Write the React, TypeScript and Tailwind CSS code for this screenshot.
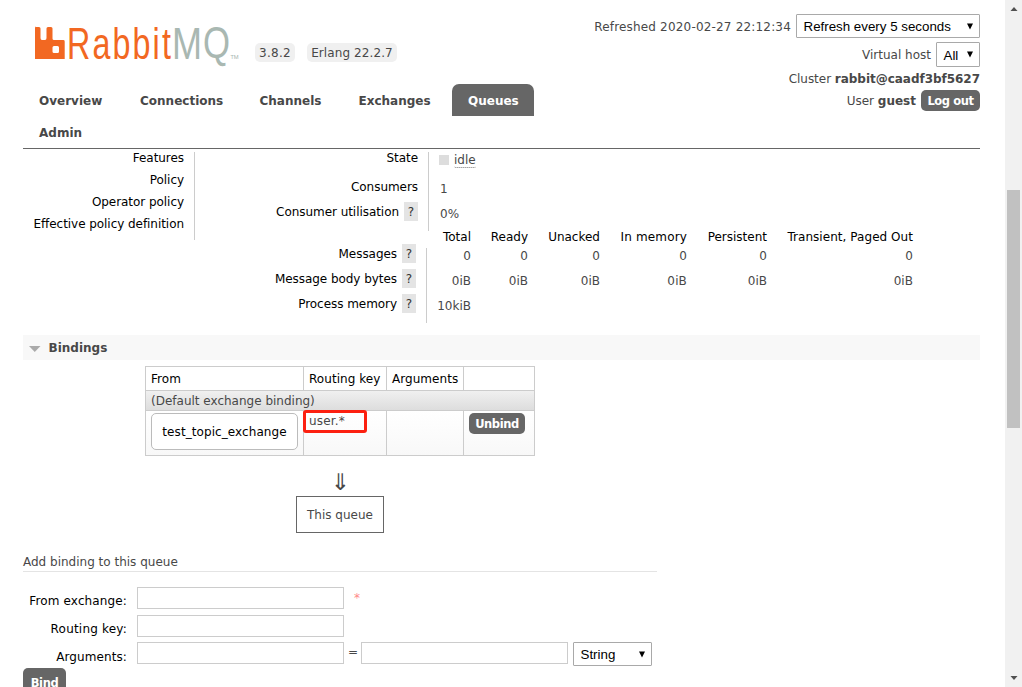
import type { ReactNode } from "react";

const tabs = [
  { name: "Overview", cls: "w-[101px]" },
  { name: "Connections", cls: "w-[119.5px]" },
  { name: "Channels", cls: "w-[99px]" },
  { name: "Exchanges", cls: "w-[109.5px]" },
  { name: "Queues", cls: "w-[82px] rounded-t-[7px] bg-[#666] text-white" },
];

const columns = [
  { head: "Total", cls: "w-11", values: ["0", "0iB", "10kiB"] },
  { head: "Ready", cls: "w-[57px]", values: ["0", "0iB"] },
  { head: "Unacked", cls: "w-[72px]", values: ["0", "0iB"] },
  { head: "In memory", cls: "w-[87px] tracking-[0.15px]", values: ["0", "0iB"] },
  { head: "Persistent", cls: "w-20", values: ["0", "0iB"] },
  { head: "Transient, Paged Out", cls: "w-[146px] tracking-[0.05px]", values: ["0", "0iB"] },
];

function Logo() {
  return (
    <svg width="206" height="48" viewBox="0 0 206 48" className="block">
      <path
        fill="#f26822"
        fillRule="evenodd"
        d="M2 4h3q1.500 0 1.500 1.500v9.500q0 2 1.500 2h3q1.500 0 1.500-2v-9.500q0-1.500 1.500-1.500h3q1.500 0 1.500 1.500v10q0 1.500 1.500 1.500h9.300q1.400 0 1.400 1.400v17.600h-29.700v-31q0-1.500 1-1.500zM18.500 24.500q0-1.500 1.500-1.500h3.500q1.500 0 1.500 1.500v4q0 1.500-1.500 1.500h-3.500q-1.500 0-1.500-1.500z"
      />
      <g fontFamily="Liberation Sans, Arial, sans-serif">
        <text x="33" y="36" fontSize="45" fill="#f26822" letterSpacing="3" textLength="106" lengthAdjust="spacingAndGlyphs">Rabbit</text>
        <text x="138" y="36" fontSize="45" fill="#a9b8b2" textLength="30" lengthAdjust="spacingAndGlyphs">M</text>
        <text x="169" y="35" fontSize="44" fill="#a9b8b2" textLength="27" lengthAdjust="spacingAndGlyphs">Q</text>
      </g>
      <text x="196.500" y="36" fontSize="5.500" fontFamily="Roboto, sans-serif" fill="#a9b8b2">TM</text>
    </svg>
  );
}

function Select({ label, cls }: { label: string; cls: string }) {
  return (
    <button className={`flex items-center justify-between rounded-[1px] border border-[#a9a9a9] bg-white pr-1.5 pl-[6.5px] font-['Liberation_Sans',sans-serif] text-[13.333px] text-black ${cls}`}>
      <span className="pt-0.5">{label}</span>
      <svg width="6" height="7" viewBox="0 0 6 7"><path d="M0 .5h6L3 6.500z" fill="#000" /></svg>
    </button>
  );
}

function Label({ children, help, cls = "h-[22px]" }: { children: ReactNode; help?: boolean; cls?: string }) {
  return (
    <div className={`flex items-start justify-end tracking-[-0.05px] text-black ${cls}`}>
      <span>{children}</span>
      {help && <span className="-mt-0.5 ml-[5px] h-[19px] w-3.5 bg-[#e4e4e4] pt-0.5 text-center text-[#333]">?</span>}
    </div>
  );
}

const input = "block h-[22px] w-[207px] border border-[#ccc] bg-white";
const button = "rounded-[5px] bg-[#666] text-center text-[11.5px] font-bold tracking-[-0.4px] text-white";

export default function App() {
  return (
    <div className="flex h-[687px] w-[1022px] overflow-hidden bg-white font-['DejaVu_Sans',Verdana,sans-serif] text-[12px] leading-4 whitespace-nowrap text-[#484848]">
      <div className="h-full w-[1005px] overflow-hidden pr-[25px] pl-[23px]">
        <header className="flex h-[149px] justify-between border-b border-[#666]">
          <div className="w-[520px]">
            <div className="flex h-[84px] pt-[23px] pl-[11px]">
              <Logo />
              <span className="mt-5 ml-[15px] h-[19px] w-10 rounded-[5px] bg-[#f0f0f0] pt-0.5 text-center tracking-[0.3px]">3.8.2</span>
              <span className="mt-5 ml-3 h-[19px] w-[90px] rounded-[5px] bg-[#f0f0f0] pt-0.5 text-center tracking-[0.1px]">Erlang 22.2.7</span>
            </div>
            <nav className="font-bold">
              <div className="flex h-8">
                {tabs.map((t) => (
                  <a key={t.name} className={`h-8 shrink-0 pt-[9px] pl-4 ${t.cls}`}>{t.name}</a>
                ))}
              </div>
              <a className="block pt-[9px] pl-4">Admin</a>
            </nav>
          </div>
          <div className="flex flex-col items-end pt-3.5">
            <div className="flex h-7">
              <span className="mt-[5px] mr-[5px] tracking-[0.18px]">Refreshed 2020-02-27 22:12:34</span>
              <Select label="Refresh every 5 seconds" cls="h-6 w-[184px]" />
            </div>
            <div className="flex h-[29px]">
              <span className="mt-[5px] mr-[5px]">Virtual host</span>
              <Select label="All" cls="h-[25px] w-11" />
            </div>
            <div className="h-[19px] tracking-[-0.03px]">Cluster <b>rabbit@caadf3bf5627</b></div>
            <div className="flex">
              <span className="mt-[3px] mr-[5px]">User <b>guest</b></span>
              <button className={`h-[21px] w-[59px] ${button}`}>Log out</button>
            </div>
          </div>
        </header>

        <section className="flex h-[186px] pt-px">
          <div className="flex h-[90px]">
            <div className="w-[161px]">
              <Label>Features</Label>
              <Label>Policy</Label>
              <Label>Operator policy</Label>
              <Label>Effective policy definition</Label>
            </div>
            <div className="mt-0.5 ml-2.5 w-px bg-[#ccc]" />
          </div>
          <div className="ml-[51px]">
            <div className="flex h-[81px]">
              <div className="w-[172px]">
                <Label cls="h-[29px]">State</Label>
                <Label cls="h-[25px]">Consumers</Label>
                <Label help cls="h-[27px]">Consumer utilisation</Label>
              </div>
              <div className="mt-0.5 ml-2.5 w-px bg-[#ccc]" />
              <div className="pt-0.5 pl-2.5">
                <div className="flex h-[29px]">
                  <span className="mt-[3px] mr-[5px] h-2.5 w-2.5 bg-[#ddd]" />
                  <span className="h-4 rounded-[2px] border-b border-dotted border-[#777]">idle</span>
                </div>
                <div className="h-[25px] pl-px">1</div>
                <div className="pl-px">0%</div>
              </div>
            </div>
            <div className="flex">
              <div className="w-[170px] pt-[15px]">
                <Label help cls="h-[25px]">Messages</Label>
                <Label help cls="h-[25px]">Message body bytes</Label>
                <Label help cls="h-[25px]">Process memory</Label>
              </div>
              <div className="mt-[17px] ml-2.5 h-[75px] w-px bg-[#ccc]" />
              <div className="flex">
                {columns.map((c) => (
                  <div key={c.head} className={`flex flex-col items-end ${c.cls}`}>
                    <div className="-mt-0.5 h-[19px] text-black">{c.head}</div>
                    {c.values.map((v) => (
                      <div key={v} className="h-[25px]">{v}</div>
                    ))}
                  </div>
                ))}
              </div>
            </div>
          </div>
        </section>

        <h2 className="flex h-[25px] items-center bg-[#f8f8f8] pl-1.5 font-bold">
          <svg width="12" height="6" viewBox="0 0 12 6" className="mt-0.5 mr-[7.5px]"><path d="M0 0h11.500L5.750 6z" fill="#aaa" /></svg>
          Bindings
        </h2>

        <div className="mt-1.5 ml-[122px] w-[390px] border border-[#ccc]">
          <div className="flex h-6 border-b border-[#ccc] tracking-[0.05px] text-black">
            <div className="w-[158px] border-r border-[#ccc] pt-1 pl-[5px]">From</div>
            <div className="w-[83px] border-r border-[#ccc] pt-1 pl-[5px]">Routing key</div>
            <div className="w-[77px] border-r border-[#ccc] pt-1 pl-[5px]">Arguments</div>
          </div>
          <div className="h-5 border-b border-[#ccc] bg-linear-to-b from-[#f0f0f0] to-[#ddd] pt-0.5 pl-[5px]">(Default exchange binding)</div>
          <div className="flex h-11 bg-linear-to-b from-white to-[#f8f8f8]">
            <div className="w-[158px] border-r border-[#ccc] pt-0.5 pl-[5px]">
              <a className="block h-[37px] w-[147px] rounded-[5px] border border-[#bbb] bg-white pt-2.5 text-center tracking-[0.08px] text-black">test_topic_exchange</a>
            </div>
            <div className="relative w-[83px] border-r border-[#ccc] pt-0.5 pl-[5px] tracking-[0.15px]">
              user.*
              <div className="absolute -top-px -left-px h-[23px] w-16 rounded-[3px] border-3 border-[#fc2010]" />
            </div>
            <div className="w-[77px] border-r border-[#ccc]" />
            <div className="pt-0.5 pl-[5px]">
              <button className={`h-[21px] w-14 ${button}`}>Unbind</button>
            </div>
          </div>
        </div>

        <div className="ml-[273px] flex h-[77px] w-[88px] flex-col items-center pt-[15px]">
          <div className="h-[25px] pt-px pl-px text-[23px] leading-5">⇓</div>
          <div className="h-[37px] w-[88px] border border-[#666] pt-2.5 text-center">This queue</div>
        </div>

        <h3 className="mt-[21px] h-[18px] w-[634px] border-b border-[#e4e4e4]">Add binding to this queue</h3>
        <form>
          <div className="mt-[15px] flex h-7">
            <label className="mt-1.5 w-[104px] text-right tracking-[0.13px] text-black">From exchange:</label>
            <input className={`ml-2.5 ${input}`} />
            <span className="mt-[3px] ml-2.5 text-[#f88]">*</span>
          </div>
          <div className="flex h-[27px]">
            <label className="mt-1.5 w-[104px] text-right tracking-[0.2px] text-black">Routing key:</label>
            <input className={`ml-2.5 ${input}`} />
          </div>
          <div className="flex h-[26px]">
            <label className="mt-[7px] w-[104px] text-right tracking-[0.1px] text-black">Arguments:</label>
            <input className={`ml-2.5 ${input}`} />
            <span className="mt-0.5 w-[17px] pl-1">=</span>
            <input className={input} />
            <Select label="String" cls="ml-[5px] h-6 w-[79px]" />
          </div>
          <button className={`block h-7 w-[43px] pt-0.5 ${button}`}>Bind</button>
        </form>
      </div>

      <div className="flex h-full w-[17px] flex-col items-center bg-[#f1f1f1]">
        <svg width="8" height="4" viewBox="0 0 8 4" className="mt-[7px] shrink-0"><path d="M.5 4 4 0l3.500 4z" fill="#505050" /></svg>
        <div className="mt-[179px] h-[238px] w-[13px] bg-[#c1c1c1]" />
        <svg width="8" height="4" viewBox="0 0 8 4" className="mt-62 shrink-0"><path d="M.5 0 4 4l3.500-4z" fill="#505050" /></svg>
      </div>
    </div>
  );
}
